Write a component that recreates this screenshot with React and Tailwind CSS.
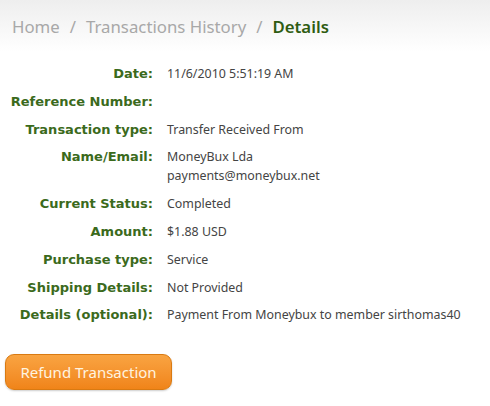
const rows = [
  { label: "Date:", value: ["11/6/2010 5:51:19 AM"] },
  { label: "Reference Number:", value: [""] },
  { label: "Transaction type:", value: ["Transfer Received From"] },
  { label: "Name/Email:", value: ["MoneyBux Lda", "payments@moneybux.net"] },
  { label: "Current Status:", value: ["Completed"] },
  { label: "Amount:", value: ["$1.88 USD"] },
  { label: "Purchase type:", value: ["Service"] },
  { label: "Shipping Details:", value: ["Not Provided"] },
  { label: "Details (optional):", value: ["Payment From Moneybux to member sirthomas40"] },
];

export default function App() {
  return (
    <div
      className="w-[490px] h-[406px] bg-white overflow-hidden"
      style={{ fontFamily: '"Noto Sans", "Open Sans", sans-serif' }}
    >
      <div className="h-[52px] bg-gradient-to-b from-[#eeeeee] to-white pl-3 pt-[14px] text-[16.8px] leading-[26px]">
        <span className="text-[#a8a8a8]">Home</span>
        <span className="text-[#a8a8a8] px-[10px]">/</span>
        <span className="text-[#a8a8a8]">Transactions History</span>
        <span className="text-[#a8a8a8] px-[10px]">/</span>
        <span className="text-[#2f5c12] font-semibold">Details</span>
      </div>

      <div className="flex flex-col gap-[8.8px] pt-[12px] text-[12.4px] leading-[19px]">
        {rows.map((row) => (
          <div key={row.label} className="flex">
            <div
              className="w-[153px] text-right font-bold text-[13px] text-[#3b6a1c] shrink-0"
              style={{ fontFamily: '"DejaVu Sans", sans-serif' }}
            >
              {row.label}
            </div>
            <div className="pl-[14px] text-[#444444] min-h-[19px]">
              {row.value.map((v, i) => (
                <div key={i}>{v}</div>
              ))}
            </div>
          </div>
        ))}
      </div>

      <div className="pl-[5px] pt-[30px]">
        <button className="w-[167px] h-[36px] rounded-[9px] border border-[#d97a12] bg-gradient-to-b from-[#f9a441] to-[#f08418] text-[#fff4e0] text-[15px] shadow-[0_1px_2px_rgba(0,0,0,0.2)]">
          Refund Transaction
        </button>
      </div>
    </div>
  );
}
